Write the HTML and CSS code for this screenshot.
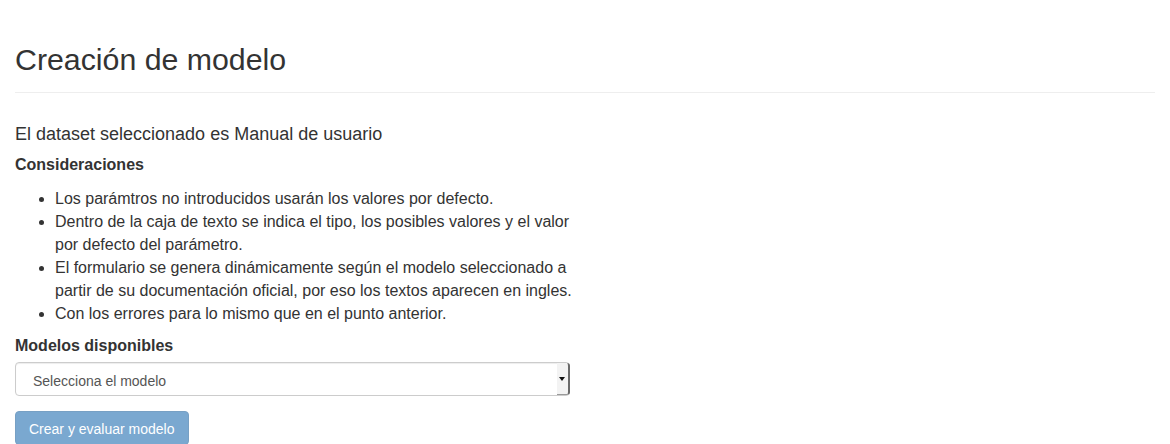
FILE: index.html
```html
<!DOCTYPE html>
<html lang="es">
<head>
<meta charset="utf-8">
<title>Creación de modelo</title>
<link rel="stylesheet" href="styles.css">
</head>
<body>
<div class="container">
  <div class="page-header">
    <h1>Creación de modelo</h1>
  </div>
  <div class="col">
    <p class="lead">El dataset seleccionado es Manual de usuario</p>
    <h5 class="section-title">Consideraciones</h5>
    <ul class="notes">
      <li>Los parámtros no introducidos usarán los valores por defecto.</li>
      <li>Dentro de la caja de texto se indica el tipo, los posibles valores y el valor por defecto del parámetro.</li>
      <li>El formulario se genera dinámicamente según el modelo seleccionado a partir de su documentación oficial, por eso los textos aparecen en ingles.</li>
      <li>Con los errores para lo mismo que en el punto anterior.</li>
    </ul>
    <label class="section-title label-models" for="modelo">Modelos disponibles</label>
    <div class="select-wrap">
      <select id="modelo" class="form-control">
        <option>Selecciona el modelo</option>
      </select>
    </div>
    <button class="btn btn-primary" type="button" disabled>Crear y evaluar modelo</button>
  </div>
</div>
</body>
</html>
```
FILE: styles.css
```css
html, body {
  margin: 0;
  padding: 0;
  background: #fff;
}
body {
  font-family: "Liberation Sans", Arial, Helvetica, sans-serif;
  color: #333;
  font-size: 14px;
}
.container {
  padding: 0 15px;
}
.page-header {
  padding-top: 43px;
  padding-bottom: 16px;
  border-bottom: 1px solid #eee;
}
.page-header h1 {
  margin: 0;
  font-size: 30.3px;
  line-height: 33px;
  font-weight: 500;
}
.col {
  width: 555px;
  display: flex;
  flex-direction: column;
  align-items: flex-start;
}
.lead {
  margin: 28px 0 0;
  font-size: 18px;
  line-height: 26px;
}
.section-title {
  display: block;
  margin: 7px 0 0;
  font-size: 16px;
  line-height: 22px;
  font-weight: 700;
}
.notes {
  align-self: stretch;
  margin: 11px -6px 0 0;
  padding-left: 40px;
  font-size: 16px;
  line-height: 23px;
}
.label-models {
  margin-top: 10px;
}
.select-wrap {
  position: relative;
  align-self: stretch;
  margin-top: 5px;
}
.form-control {
  display: block;
  width: 100%;
  height: 34px;
  box-sizing: border-box;
  padding: 3px 0 0 17px;
  margin: 0;
  font-family: "Liberation Sans", Arial, Helvetica, sans-serif;
  font-size: 14px;
  color: #555;
  background: #fff;
  border: 1px solid #ccc;
  border-radius: 4px;
  box-shadow: inset 0 1px 1px rgba(0,0,0,.075);
  -webkit-appearance: none;
  appearance: none;
}
.select-wrap::after {
  content: "";
  position: absolute;
  right: 0;
  top: 1px;
  bottom: 1px;
  width: 11px;
  background: #f3f3f3;
  border-right: 2px solid #6a6a6a;
  border-bottom: 1px solid #9a9a9a;
  border-radius: 0 3px 3px 0;
  pointer-events: none;
}
.select-wrap::before {
  content: "";
  position: absolute;
  right: 5px;
  top: 15px;
  width: 0;
  height: 0;
  border-left: 3px solid transparent;
  border-right: 3px solid transparent;
  border-top: 4px solid #111;
  z-index: 1;
  pointer-events: none;
}
.btn {
  margin-top: 15px;
  height: 34px;
  padding: 1px 13px 0;
  font-family: "Liberation Sans", Arial, Helvetica, sans-serif;
  font-size: 14px;
  line-height: 20px;
  border-radius: 4px;
  cursor: not-allowed;
}
.btn-primary {
  color: #fff;
  background: #7aa8d0;
  border: 1px solid #77a0c4;
}
```
